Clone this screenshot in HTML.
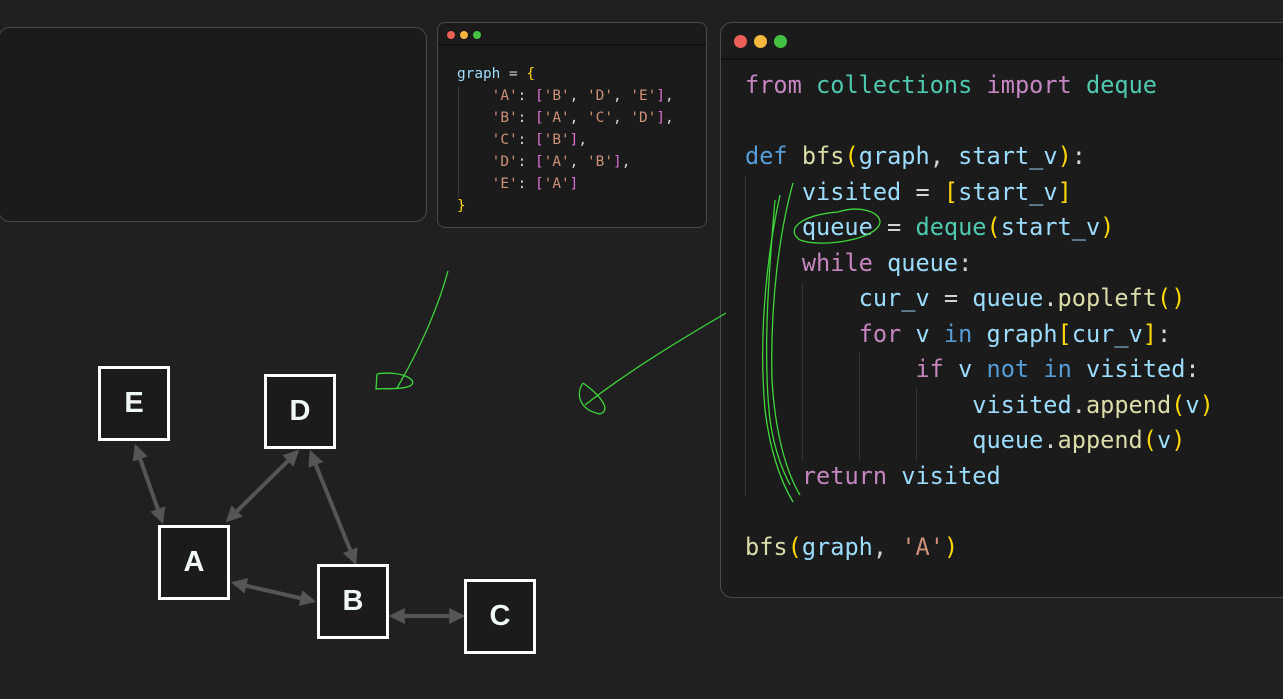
<!DOCTYPE html>
<html><head><meta charset="utf-8"><style>
html,body{margin:0;padding:0;background:#202020;width:1283px;height:699px;overflow:hidden;position:relative}
.panel{position:absolute;background:#1b1b1b;border:1px solid #4a4a4a;box-sizing:border-box}
.code{position:absolute;font-family:"DejaVu Sans Mono","Liberation Mono",monospace;white-space:pre;margin:0;color:#9cdcfe}
.k{color:#c586c0}.t{color:#4ec9b0}.b{color:#569cd6}.f{color:#dcdcaa}.y{color:#ffd700}.s{color:#ce9178}.p{color:#da70d6}.w{color:#d4d4d4}
.dot{position:absolute;border-radius:50%}
.g{position:absolute;width:1px;background:#353535}
.node{position:absolute;width:72px;height:75px;border:3px solid #fff;box-sizing:border-box;color:#f0f8f8;font-family:"Liberation Sans",sans-serif;font-weight:bold;font-size:29px;display:flex;align-items:center;justify-content:center;background:#1b1b1b}
</style></head><body>
<div class="panel" style="left:-2px;top:27px;width:429px;height:195px;border-radius:12px"></div>

<div class="panel" style="left:437px;top:22px;width:270px;height:206px;border-radius:8px">
<div style="position:absolute;left:0;right:0;top:21px;height:2px;background:#111"></div>
<div class="dot" style="left:9px;top:8px;width:8px;height:8px;background:#ec5f57"></div>
<div class="dot" style="left:22px;top:8px;width:8px;height:8px;background:#f5b73e"></div>
<div class="dot" style="left:35px;top:8px;width:8px;height:8px;background:#45c043"></div>
<div class="g" style="left:20px;top:64px;height:110px;background:#3a3a3a"></div>
<pre class="code" style="left:19px;top:40px;font-size:14.4px;line-height:22px">graph <span class="w">=</span> <span class="y">{</span>
    <span class="s">'A'</span><span class="w">:</span> <span class="p">[</span><span class="s">'B'</span><span class="w">,</span> <span class="s">'D'</span><span class="w">,</span> <span class="s">'E'</span><span class="p">]</span><span class="w">,</span>
    <span class="s">'B'</span><span class="w">:</span> <span class="p">[</span><span class="s">'A'</span><span class="w">,</span> <span class="s">'C'</span><span class="w">,</span> <span class="s">'D'</span><span class="p">]</span><span class="w">,</span>
    <span class="s">'C'</span><span class="w">:</span> <span class="p">[</span><span class="s">'B'</span><span class="p">]</span><span class="w">,</span>
    <span class="s">'D'</span><span class="w">:</span> <span class="p">[</span><span class="s">'A'</span><span class="w">,</span> <span class="s">'B'</span><span class="p">]</span><span class="w">,</span>
    <span class="s">'E'</span><span class="w">:</span> <span class="p">[</span><span class="s">'A'</span><span class="p">]</span>
<span class="y">}</span></pre>
</div>

<div class="panel" style="left:720px;top:22px;width:580px;height:576px;border-radius:12px">
<div style="position:absolute;left:0;right:0;top:35px;height:2px;background:#111"></div>
<div class="dot" style="left:13px;top:12px;width:13px;height:13px;background:#ec5f57"></div>
<div class="dot" style="left:33px;top:12px;width:13px;height:13px;background:#f5b73e"></div>
<div class="dot" style="left:53px;top:12px;width:13px;height:13px;background:#45c043"></div>
<div class="g" style="left:24px;top:153px;height:320px"></div>
<div class="g" style="left:81px;top:260px;height:178px"></div>
<div class="g" style="left:138px;top:330px;height:108px"></div>
<div class="g" style="left:195px;top:365px;height:73px"></div>
<pre class="code" style="left:24px;top:45px;font-size:23.6px;line-height:35.55px"><span class="k">from</span> <span class="t">collections</span> <span class="k">import</span> <span class="t">deque</span>

<span class="b">def</span> <span class="f">bfs</span><span class="y">(</span>graph<span class="w">,</span> start_v<span class="y">)</span><span class="w">:</span>
    visited <span class="w">=</span> <span class="y">[</span>start_v<span class="y">]</span>
    queue <span class="w">=</span> <span class="t">deque</span><span class="y">(</span>start_v<span class="y">)</span>
    <span class="k">while</span> queue<span class="w">:</span>
        cur_v <span class="w">=</span> queue<span class="w">.</span><span class="f">popleft</span><span class="y">()</span>
        <span class="k">for</span> v <span class="b">in</span> graph<span class="y">[</span>cur_v<span class="y">]</span><span class="w">:</span>
            <span class="k">if</span> v <span class="b">not</span> <span class="b">in</span> visited<span class="w">:</span>
                visited<span class="w">.</span><span class="f">append</span><span class="y">(</span>v<span class="y">)</span>
                queue<span class="w">.</span><span class="f">append</span><span class="y">(</span>v<span class="y">)</span>
    <span class="k">return</span> visited

<span class="f">bfs</span><span class="y">(</span>graph<span class="w">,</span> <span class="s">'A'</span><span class="y">)</span></pre>
</div>

<svg width="1283" height="699" style="position:absolute;left:0;top:0">
<defs><marker id="ah" viewBox="0 0 10 10" refX="8" refY="5" markerWidth="4" markerHeight="4" orient="auto-start-reverse"><path d="M0,0 L10,5 L0,10 z" fill="#555"/></marker></defs>
<g stroke="#555" stroke-width="4" fill="none" marker-start="url(#ah)" marker-end="url(#ah)">
<line x1="136" y1="447" x2="162" y2="521"/>
<line x1="297" y1="452" x2="228" y2="520"/>
<line x1="311" y1="453" x2="355" y2="562"/>
<line x1="234" y1="583" x2="313" y2="601"/>
<line x1="392" y1="616" x2="462" y2="616"/>
</g>
<g stroke="#3fd63a" stroke-width="1.3" fill="none">
<path d="M448 271 C440 300 425 340 397 388"/>
<path d="M377 374 C400 370 420 380 410 386 C400 390 385 388 376 389 L377 374"/>
<path d="M726 313 C680 340 630 370 585 405"/>
<path d="M583 383 C575 395 580 410 600 414 C612 410 600 395 583 383"/>
<path d="M793 183 C780 230 770 300 772 380 C775 430 785 470 800 495"/>
<path d="M780 195 C768 250 758 330 765 410 C770 450 780 480 793 502"/>
<path d="M775 200 C770 260 762 350 770 420 C775 455 785 475 790 485"/>
<path d="M838 212 C860 205 880 212 880 222 C878 240 820 248 800 240 C785 230 800 215 838 212"/>
</g>
</svg>
<div class="node" style="left:98px;top:366px">E</div>
<div class="node" style="left:264px;top:374px">D</div>
<div class="node" style="left:158px;top:525px">A</div>
<div class="node" style="left:317px;top:564px">B</div>
<div class="node" style="left:464px;top:579px">C</div>
</body></html>
